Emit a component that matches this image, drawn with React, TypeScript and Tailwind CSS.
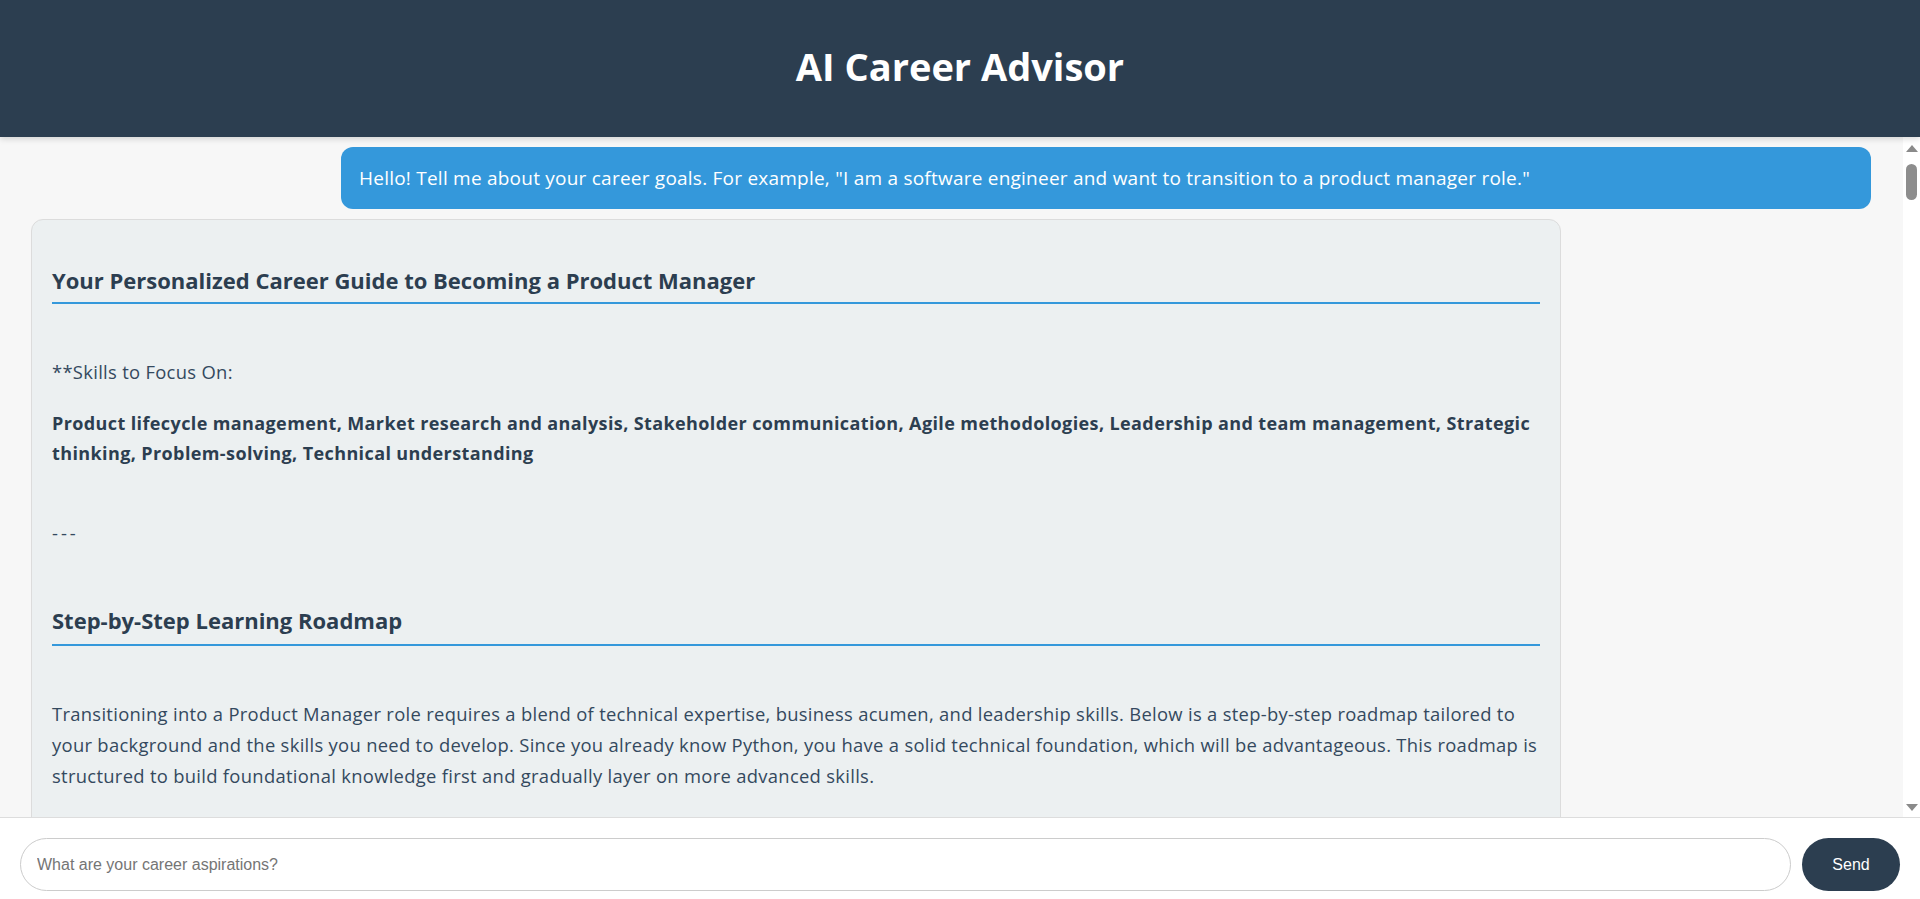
import React from "react";

const sans = "font-['Open_Sans','Noto_Sans',sans-serif]";

const phases = [
  {
    title: "Phase 1: Build Foundational Product Management Knowledge (Months 1-2)",
    intro:
      "Start by understanding what product managers do day to day, how products move from idea to launch, and how teams make decisions about what to build next.",
    items: [
      "Read \"Inspired\" by Marty Cagan and \"The Lean Product Playbook\" by Dan Olsen.",
      "Complete an introductory product management course covering the product lifecycle.",
      "Learn the vocabulary: roadmaps, backlogs, user stories, MVPs, OKRs and KPIs.",
      "Shadow a product manager at your current company if possible.",
    ],
  },
  {
    title: "Phase 2: Develop Market Research and Analysis Skills (Months 2-4)",
    intro:
      "Product decisions are grounded in customer insight and data. Use your Python background to analyse data and validate ideas.",
    items: [
      "Practise customer interviews and learn to write clear problem statements.",
      "Study competitive analysis frameworks such as SWOT and Porter's Five Forces.",
      "Use Python (pandas, matplotlib) to explore product usage data and build dashboards.",
      "Learn A/B testing basics and how to interpret experiment results.",
    ],
  },
  {
    title: "Phase 3: Strengthen Stakeholder Communication (Months 4-6)",
    intro:
      "Product managers align engineering, design, sales and leadership around a shared vision. Communication is the core of the role.",
    items: [
      "Write product requirement documents (PRDs) for small features you know well.",
      "Present technical topics to non-technical audiences at team meetings.",
      "Practise negotiating scope and trade-offs with clear reasoning.",
      "Join a Toastmasters club or similar group to build presentation confidence.",
    ],
  },
  {
    title: "Phase 4: Master Agile Methodologies (Months 6-7)",
    intro:
      "Most product teams work in agile frameworks. As an engineer you have seen sprints from the inside; now learn to run them from the product side.",
    items: [
      "Earn a Certified Scrum Product Owner (CSPO) or PSPO certification.",
      "Learn to prioritise a backlog with RICE, MoSCoW or Kano models.",
      "Facilitate sprint planning, reviews and retrospectives.",
      "Get comfortable with tools such as Jira, Confluence, Linear and Productboard.",
    ],
  },
  {
    title: "Phase 5: Build Leadership and Strategic Thinking (Months 7-9)",
    intro:
      "Great product managers lead without authority and connect daily work to long-term business goals.",
    items: [
      "Volunteer to lead a cross-functional initiative or internal tool project.",
      "Study business models, unit economics and pricing strategy.",
      "Practise writing a product vision and a one-year roadmap for a product you use.",
      "Find a mentor who has made the engineer-to-PM transition.",
    ],
  },
  {
    title: "Phase 6: Gain Hands-On Experience and Make the Move (Months 9-12)",
    intro:
      "Put everything together with real projects that you can point to in interviews.",
    items: [
      "Launch a side project end to end: research, spec, build, launch and measure.",
      "Build a portfolio with case studies describing problems, decisions and outcomes.",
      "Request an internal transfer or an associate / technical PM role.",
      "Prepare for PM interviews: product sense, execution, estimation and behavioural questions.",
    ],
  },
];

function ScrollRail() {
  // static scrollbar look, as in the screenshot
  return (
    <div className="w-[17px] shrink-0 bg-white flex flex-col items-center">
      <svg width="12" height="7" viewBox="0 0 12 7" className="mt-[8px]">
        <path d="M6 0 L12 7 L0 7 Z" fill="#8a8a8a" />
      </svg>
      <div className="mt-[12px] w-[11px] h-[36px] rounded-full bg-[#8d8d8d]" />
      <svg width="12" height="7" viewBox="0 0 12 7" className="mt-auto mb-[6px]">
        <path d="M0 0 L12 0 L6 7 Z" fill="#8a8a8a" />
      </svg>
    </div>
  );
}

export default function App() {
  return (
    <div className={`h-screen flex flex-col bg-[#f7f7f7] text-[#2c3e50] ${sans}`}>
      {/* Header */}
      <header className="h-[137px] shrink-0 bg-[#2c3e50] flex items-center justify-center shadow-[0_2px_6px_rgba(0,0,0,0.15)] relative z-10">
        <h1 className="text-white text-[38px] font-bold leading-none -mt-[6px]">AI Career Advisor</h1>
      </header>

      <div className="flex-1 min-h-0 flex">
        {/* Chat area */}
        <main className="flex-1 min-w-0 overflow-y-auto [scrollbar-width:none] pl-[31px] pr-[32px] pt-[10px] pb-5 flex flex-col gap-[10px]">
          <div className="self-end w-[1530px] shrink-0 bg-[#3498db] text-white rounded-[12px] px-[18px] py-4 text-[19px] tracking-[0.23px] leading-[30px]">
            Hello! Tell me about your career goals. For example, "I am a software engineer and want to transition to a product manager role."
          </div>

          <div className="self-start w-[1530px] shrink-0 bg-[#ecf0f1] border border-[#dcdcdc] rounded-[12px] px-5 pt-5 pb-8 text-[18.4px] leading-[30.6px] tracking-[0.3px] text-[#34495e]">
            <h2 className="mt-[26px] text-[22px] leading-[29px] tracking-normal font-bold text-[#2c3e50] pb-[7px] border-b-2 border-[#3498db]">
              Your Personalized Career Guide to Becoming a Product Manager
            </h2>

            <p className="mt-[53px]">**Skills to Focus On:</p>
            <p className="mt-5 text-[18px] font-bold tracking-[0.39px] text-[#2c3e50]">
              Product lifecycle management, Market research and analysis, Stakeholder communication, Agile methodologies, Leadership and team management, Strategic thinking, Problem-solving, Technical understanding
            </p>

            <p className="mt-[49px] tracking-[3px]">---</p>

            <h2 className="mt-[58px] text-[22px] leading-[29px] tracking-normal font-bold text-[#2c3e50] pb-[9px] border-b-2 border-[#3498db]">
              Step-by-Step Learning Roadmap
            </h2>

            <p className="mt-[53px]">
              Transitioning into a Product Manager role requires a blend of technical expertise, business acumen, and leadership skills. Below is a step-by-step roadmap tailored to your background and the skills you need to develop. Since you already know Python, you have a solid technical foundation, which will be advantageous. This roadmap is structured to build foundational knowledge first and gradually layer on more advanced skills.
            </p>

            {phases.map((phase) => (
              <section key={phase.title} className="mt-[40px]">
                <h3 className="text-[20px] leading-[29px] tracking-normal font-bold text-[#2c3e50]">{phase.title}</h3>
                <p className="mt-4">{phase.intro}</p>
                <ul className="mt-3 list-disc pl-8 flex flex-col gap-1">
                  {phase.items.map((item) => (
                    <li key={item}>{item}</li>
                  ))}
                </ul>
              </section>
            ))}

            <p className="mt-[40px] tracking-[3px]">---</p>
            <h2 className="mt-[40px] text-[22px] leading-[29px] tracking-normal font-bold text-[#2c3e50] pb-[9px] border-b-2 border-[#3498db]">
              Final Tips
            </h2>
            <p className="mt-[40px]">
              Stay curious, keep talking to users, and measure everything you ship. Your engineering background is a real strength: it helps you earn the trust of developers and make realistic trade-offs. Good luck on your journey to becoming a Product Manager!
            </p>
          </div>
        </main>
        <ScrollRail />
      </div>

      {/* Input bar */}
      <footer className="shrink-0 bg-white border-t border-[#dddddd] px-5 pt-5 pb-2 flex items-center gap-[11px] font-['Liberation_Sans',Arial,sans-serif]">
        <input
          type="text"
          placeholder="What are your career aspirations?"
          className="flex-1 h-[53px] rounded-full border border-[#cccccc] px-4 text-[16px] text-[#333] placeholder:text-[#757575] outline-none bg-white"
        />
        <button className="w-[98px] h-[53px] rounded-full bg-[#2c3e50] text-white text-[16px]">Send</button>
      </footer>
    </div>
  );
}
